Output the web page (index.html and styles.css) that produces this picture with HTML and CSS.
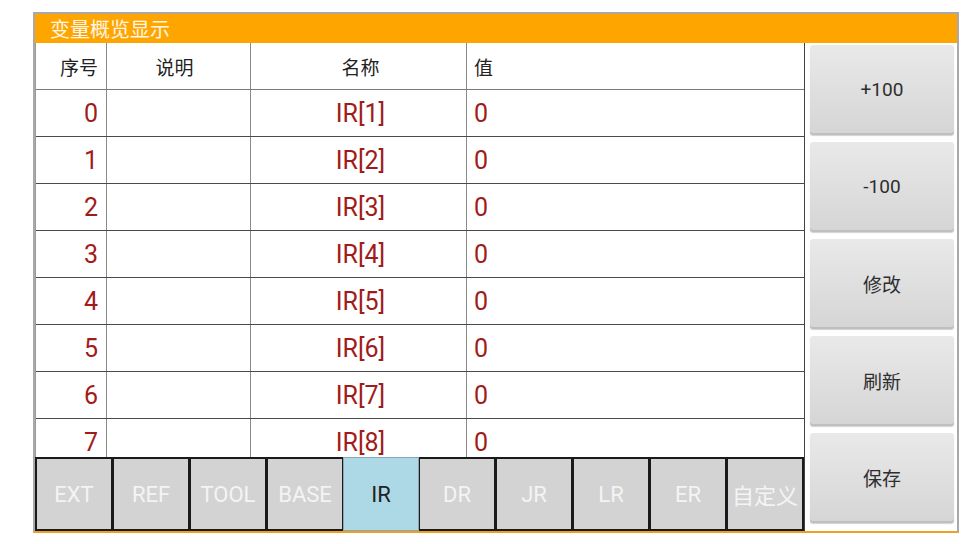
FILE: index.html
```html
<!DOCTYPE html>
<html lang="zh">
<head>
<meta charset="utf-8">
<title>变量概览显示</title>
<link rel="stylesheet" href="styles.css">
</head>
<body>
<div class="frame">
  <div class="title">变量概览显示</div>
  <div class="content">
    <div class="left">
      <div class="table">
        <div class="row head">
          <div class="cell c-num">序号</div>
          <div class="cell c-desc">说明</div>
          <div class="cell c-name">名称</div>
          <div class="cell c-val">值</div>
        </div>
        <div class="row"><div class="cell c-num">0</div><div class="cell c-desc"></div><div class="cell c-name">IR[1]</div><div class="cell c-val">0</div></div>
        <div class="row"><div class="cell c-num">1</div><div class="cell c-desc"></div><div class="cell c-name">IR[2]</div><div class="cell c-val">0</div></div>
        <div class="row"><div class="cell c-num">2</div><div class="cell c-desc"></div><div class="cell c-name">IR[3]</div><div class="cell c-val">0</div></div>
        <div class="row"><div class="cell c-num">3</div><div class="cell c-desc"></div><div class="cell c-name">IR[4]</div><div class="cell c-val">0</div></div>
        <div class="row"><div class="cell c-num">4</div><div class="cell c-desc"></div><div class="cell c-name">IR[5]</div><div class="cell c-val">0</div></div>
        <div class="row"><div class="cell c-num">5</div><div class="cell c-desc"></div><div class="cell c-name">IR[6]</div><div class="cell c-val">0</div></div>
        <div class="row"><div class="cell c-num">6</div><div class="cell c-desc"></div><div class="cell c-name">IR[7]</div><div class="cell c-val">0</div></div>
        <div class="row"><div class="cell c-num">7</div><div class="cell c-desc"></div><div class="cell c-name">IR[8]</div><div class="cell c-val">0</div></div>
      </div>
      <div class="tabs">
        <div class="tab">EXT</div>
        <div class="tab">REF</div>
        <div class="tab">TOOL</div>
        <div class="tab">BASE</div>
        <div class="tab active">IR</div>
        <div class="tab">DR</div>
        <div class="tab">JR</div>
        <div class="tab">LR</div>
        <div class="tab">ER</div>
        <div class="tab">自定义</div>
      </div>
    </div>
    <div class="side">
      <div class="btn">+100</div>
      <div class="btn">-100</div>
      <div class="btn">修改</div>
      <div class="btn">刷新</div>
      <div class="btn">保存</div>
    </div>
  </div>
</div>
</body>
</html>
```
FILE: styles.css
```css
* { box-sizing: border-box; }
html, body { margin: 0; padding: 0; background: #fff; }
body {
  font-family: Roboto, "Noto Sans CJK SC", sans-serif;
  width: 964px;
  height: 544px;
  overflow: hidden;
}
.frame {
  margin: 12px 0 0 33px;
  width: 926px;
  border-top: 2px solid #a9a9a9;
  border-left: 2px solid #a9a9a9;
  border-right: 2px solid #a9a9a9;
  border-bottom: 2px solid #f0a020;
  display: flex;
  flex-direction: column;
}
.title {
  height: 29px;
  background: #ffa500;
  color: #fff6e6;
  font-family: "Noto Sans CJK SC", sans-serif;
  font-size: 20px;
  line-height: 29px;
  padding-left: 15px;
}
.content {
  height: 488px;
  display: flex;
}
.left {
  width: 770px;
  display: flex;
  flex-direction: column;
  border-right: 1px solid #444;
}
.table {
  flex: 1;
  overflow: hidden;
  border-left: 1px solid #9a9a9a;
}
.row {
  display: grid;
  grid-template-columns: 71px 144px 216px 1fr;
  height: 47px;
  border-bottom: 1px solid #4a4a4a;
}
.row.head { border-bottom-color: #7a7a7a; }
.cell {
  border-right: 1px solid #8c8c8c;
  display: flex;
  align-items: center;
  color: #a11b1b;
  font-size: 25px;
  padding-top: 1px;
}
.cell.c-val { border-right: none; }
.head .cell {
  color: #222;
  font-family: "Noto Sans CJK SC", sans-serif;
  font-size: 19px;
  padding-top: 0;
}
.c-num { justify-content: flex-end; padding-right: 8px; }
.c-desc { justify-content: center; }
.head .c-desc { padding-right: 8px; }
.c-name { justify-content: center; padding-left: 4px; }
.c-val { padding-left: 7px; }
.tabs {
  height: 74px;
  display: flex;
  flex: none;
}
.tab {
  flex: 1;
  background: #d3d3d3;
  border: 2px solid #1a1a1a;
  margin-left: -1px;
  display: flex;
  align-items: center;
  justify-content: center;
  color: #f4f4f4;
  font-size: 22px;
  font-family: Roboto, "Noto Sans CJK SC", sans-serif;
  white-space: nowrap;
  overflow: hidden;
}
.tab:first-child { margin-left: 0; }
.tab.active {
  background: #add8e6;
  border: 1px solid #8aa8b0;
  color: #222;
  position: relative;
  z-index: 1;
}
.side {
  flex: 1;
  padding: 2px 3px 0 5px;
  display: flex;
  flex-direction: column;
  gap: 7px;
}
.btn {
  height: 90px;
  border-radius: 3px;
  background: linear-gradient(#e9e9e9, #d5d5d5);
  box-shadow: inset 0 -2px 0 #bfbfbf, 0 1px 1px rgba(0,0,0,0.18);
  display: flex;
  align-items: center;
  justify-content: center;
  color: #2e2e2e;
  font-size: 19px;
  font-family: Roboto, "Noto Sans CJK SC", sans-serif;
  padding-bottom: 2px;
}
```
